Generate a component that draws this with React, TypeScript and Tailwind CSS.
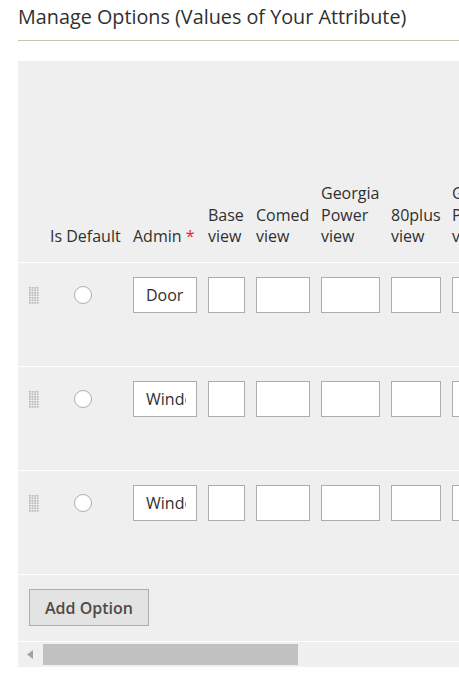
import React from "react";

const font = { fontFamily: '"Open Sans", "Noto Sans", sans-serif' };

function DragHandle() {
  const rects = [];
  for (let r = 0; r < 7; r++) {
    for (let c = 0; c < 4; c++) {
      rects.push(
        <rect key={`${r}-${c}`} x={c * 2.6} y={r * 2.5} width={1.7} height={1.7} fill="#b8b8b8" />
      );
    }
  }
  return (
    <svg width="10" height="17" viewBox="0 0 10 17">
      {rects}
    </svg>
  );
}

const cols: { w: string; label: React.ReactNode }[] = [
  { w: "w-[37px]", label: <>Base<br />view</> },
  { w: "w-[54px]", label: <>Comed<br />view</> },
  { w: "w-[59px]", label: <>Georgia<br />Power<br />view</> },
  { w: "w-[50px]", label: <>80plus<br />view</> },
  { w: "w-[70px]", label: <>Georgia<br />Power<br />view</> },
];

function Row({ value }: { value: string }) {
  return (
    <div className="flex items-start h-[104px] pt-[14px] border-b border-white">
      <div className="w-[32px] shrink-0 pl-[11px] pt-[10px]">
        <DragHandle />
      </div>
      <div className="w-[71px] shrink-0 pl-[24px] pt-[9px]">
        <div className="w-[18px] h-[18px] rounded-full border border-[#adadad] bg-white" />
      </div>
      <div className="w-[64px] shrink-0 ml-[12px]">
        <input
          readOnly
          value={value}
          className="block h-[36px] w-[64px] border border-[#adadad] bg-white pl-[12px] pr-[10px] text-[16px] text-[#303030] outline-none"
          style={font}
        />
      </div>
      {cols.map((c, i) => (
        <div key={i} className={`${c.w} shrink-0 ml-[11px]`}>
          <div className="h-[36px] w-full border border-[#adadad] bg-white" />
        </div>
      ))}
    </div>
  );
}

export default function App() {
  return (
    <div className="bg-white w-[459px] h-[696px] overflow-hidden text-[#303030]" style={font}>
      <div className="pl-[18px]">
        <div className="pt-[4px] h-[41px] text-[19.8px] leading-[26px] text-[#303030] border-b border-[#cac3b4]">
          Manage Options (Values of Your Attribute)
        </div>
        <div className="mt-[20px] bg-[#efefef] overflow-hidden">
          <div className="w-[600px]">
            <div className="flex items-end h-[202px] pb-[14px] border-b border-white text-[16px] font-medium leading-[21.7px]">
              <div className="w-[32px] shrink-0" />
              <div className="w-[71px] shrink-0 whitespace-nowrap">Is Default</div>
              <div className="w-[64px] shrink-0 ml-[12px] whitespace-nowrap">
                Admin <span className="text-[#e22626]">*</span>
              </div>
              {cols.map((c, i) => (
                <div key={i} className={`${c.w} shrink-0 ml-[11px] whitespace-nowrap`}>
                  {c.label}
                </div>
              ))}
            </div>
            <Row value="Door" />
            <Row value="Window" />
            <Row value="Window" />
            <div className="h-[67px] pt-[14px] pl-[11px] border-b border-white">
              <button className="h-[37px] w-[120px] bg-[#e3e3e3] border border-[#adadad] text-[16px] font-semibold text-[#514943]">
                Add Option
              </button>
            </div>
          </div>
          <div className="h-[25px] bg-[#f0f0f0] flex items-center">
            <div className="w-[25px] flex justify-center">
              <svg width="7" height="9" viewBox="0 0 7 9">
                <polygon points="6,0 6,9 0,4.5" fill="#a3a3a3" />
              </svg>
            </div>
            <div className="h-[21px] w-[255px] bg-[#c1c1c1]" />
          </div>
        </div>
      </div>
    </div>
  );
}
